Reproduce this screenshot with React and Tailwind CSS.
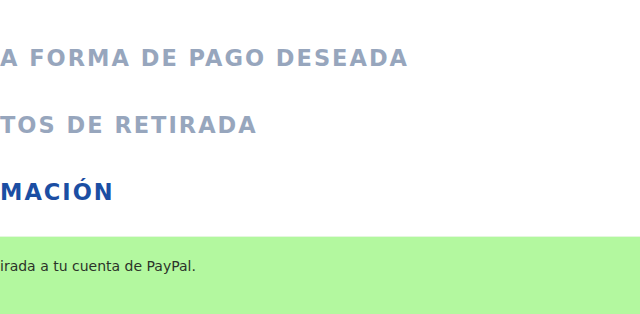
export default function App() {
  const steps = [
    { label: "A FORMA DE PAGO DESEADA", active: false },
    { label: "TOS DE RETIRADA", active: false },
    { label: "MACIÓN", active: true },
  ];

  return (
    <div className="w-[640px] h-[314px] overflow-hidden bg-white font-['DejaVu_Sans',Verdana,sans-serif]">
      <div className="flex flex-col gap-[36px] pt-[43px]">
        {steps.map((step) => (
          <h2
            key={step.label}
            className={`text-[22.5px] leading-[31px] font-bold tracking-[2px] whitespace-nowrap ${
              step.active ? "text-[#1b4ea3]" : "text-[#97a6bd]"
            }`}
          >
            {step.label}
          </h2>
        ))}
      </div>

      <div className="mt-[28px] h-[80px] bg-[#b3f89f] border-t border-[#e4f7de] pt-[20px]">
        <p className="text-[14px] leading-[18px] text-[#2c3329] whitespace-nowrap">
          irada a tu cuenta de PayPal.
        </p>
      </div>
    </div>
  );
}
